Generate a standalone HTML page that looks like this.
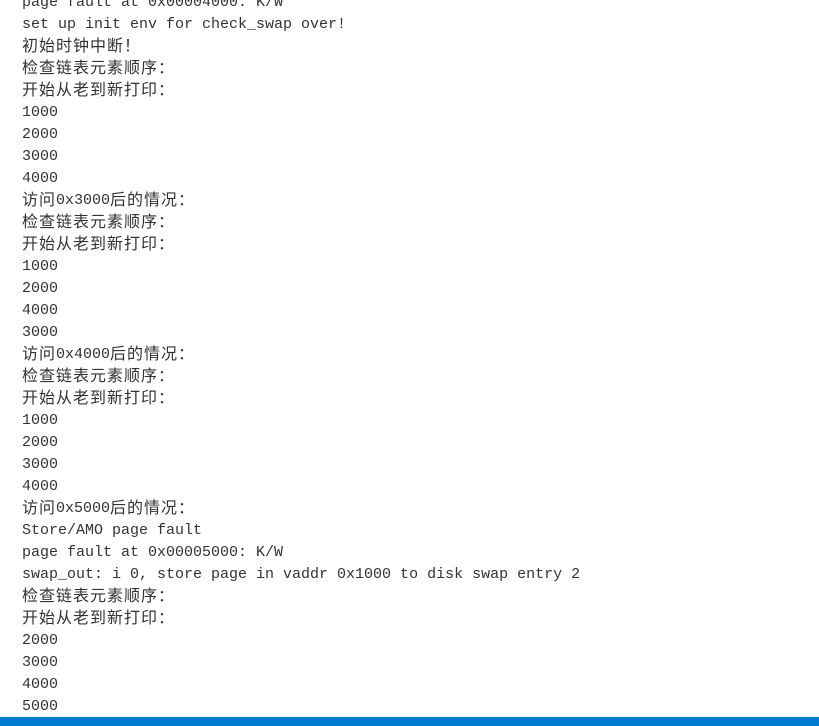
<!DOCTYPE html>
<html><head><meta charset="utf-8"><style>
html,body{margin:0;padding:0;background:#fff;width:819px;height:726px;overflow:hidden;position:relative}
.t{position:absolute;left:22px;top:-8px;font-family:"Liberation Mono","Noto Sans CJK SC",monospace;font-size:15px;color:#333}
.t div{height:22px;line-height:22px;white-space:pre;overflow:hidden}
.c{font-family:"Noto Sans CJK SC",sans-serif;font-size:16px;letter-spacing:1px;line-height:16px;vertical-align:-1px}
.bar{position:absolute;left:0;top:717px;width:819px;height:9px;background:#007acc}
</style></head><body>
<div class="t"><div>page fault at 0x00004000: K/W</div><div>set up init env for check_swap over!</div><div><span class="c">初始时钟中断！</span></div><div><span class="c">检查链表元素顺序：</span></div><div><span class="c">开始从老到新打印：</span></div><div>1000</div><div>2000</div><div>3000</div><div>4000</div><div><span class="c">访问</span>0x3000<span class="c">后的情况：</span></div><div><span class="c">检查链表元素顺序：</span></div><div><span class="c">开始从老到新打印：</span></div><div>1000</div><div>2000</div><div>4000</div><div>3000</div><div><span class="c">访问</span>0x4000<span class="c">后的情况：</span></div><div><span class="c">检查链表元素顺序：</span></div><div><span class="c">开始从老到新打印：</span></div><div>1000</div><div>2000</div><div>3000</div><div>4000</div><div><span class="c">访问</span>0x5000<span class="c">后的情况：</span></div><div>Store/AMO page fault</div><div>page fault at 0x00005000: K/W</div><div>swap_out: i 0, store page in vaddr 0x1000 to disk swap entry 2</div><div><span class="c">检查链表元素顺序：</span></div><div><span class="c">开始从老到新打印：</span></div><div>2000</div><div>3000</div><div>4000</div><div>5000</div></div>
<div class="bar"></div>
</body></html>
